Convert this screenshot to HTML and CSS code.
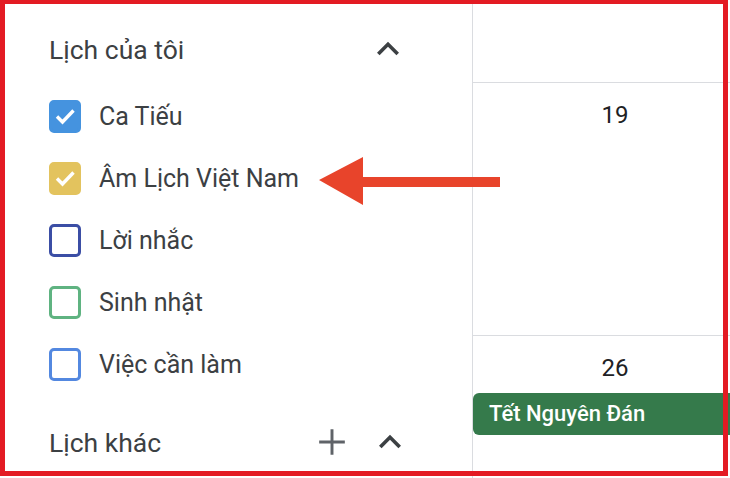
FILE: index.html
```html
<!DOCTYPE html>
<html lang="vi">
<head>
	<meta charset="UTF-8">
	<title>Lịch của tôi</title>
	<link rel="stylesheet" href="styles.css">
</head>
<body>
	<main class="page">
		<aside class="side">
			<h3 class="group">
				<span>Lịch của tôi</span>
				<span class="tools">
					<svg class="icon" viewBox="0 0 24 24"><path d="M12 8l-6 6 1.41 1.41L12 10.83l4.59 4.58L18 14z"/></svg>
				</span>
			</h3>
			<ul class="list">
				<li><i class="box on blue"><svg viewBox="0 0 32 32"><polyline points="8,16.5 13.5,22 24.5,10.5"/></svg></i>Ca Tiếu</li>
				<li><i class="box on yellow"><svg viewBox="0 0 32 32"><polyline points="8,16.5 13.5,22 24.5,10.5"/></svg></i>Âm Lịch Việt Nam</li>
				<li><i class="box navy"></i>Lời nhắc</li>
				<li><i class="box green"></i>Sinh nhật</li>
				<li><i class="box sky"></i>Việc cần làm</li>
			</ul>
			<h3 class="group other">
				<span>Lịch khác</span>
				<span class="tools">
					<svg class="icon plus" viewBox="0 0 24 24"><path d="M12 5v14M5 12h14"/></svg>
					<svg class="icon" viewBox="0 0 24 24"><path d="M12 8l-6 6 1.41 1.41L12 10.83l4.59 4.58L18 14z"/></svg>
				</span>
			</h3>
		</aside>
		<section class="cal">
			<div class="cell head"></div>
			<div class="cell week">
				<div class="day">19</div>
			</div>
			<div class="cell week">
				<div class="day">26</div>
				<div class="event">Tết Nguyên Đán</div>
			</div>
		</section>
	</main>
	<!-- chu thich tren anh chup -->
	<svg class="arrow" viewBox="0 0 182 50"><polygon points="1,24 45,1 45,21 182,21 182,31 45,31 45,49"/></svg>
	<div class="frame"></div>
</body>
</html>
```
FILE: styles.css
```css
html,body{
	margin: 0;
	width: 730px;
	height: 478px;
	overflow: hidden;
	background: #fff;
}
body{
	position: relative;
	font-family: Roboto, "Noto Sans", sans-serif;
	color: #3c4043;
}
.page{
	display: flex;
	height: 100%;
}
/* cot trai */
.side{
	width: 472px;
	flex: none;
	padding: 18px 63px 0 49px;
	box-sizing: border-box;
}
.group{
	display: flex;
	align-items: center;
	justify-content: space-between;
	height: 62px;
	margin: 0;
	font-size: 26.5px;
	font-weight: 400;
}
.group.other{
	margin-top: 16px;
}
.tools{
	display: flex;
	gap: 14px;
	margin-right: -1px;
}
.icon{
	width: 44px;
	height: 44px;
	fill: #3c4043;
}
.icon.plus{
	fill: none;
	stroke: #5f6368;
	stroke-width: 1.6;
}
.other .icon:last-child{
	margin-right: -2px;
}
.list{
	margin: 5px 0 0;
	padding: 0;
	list-style: none;
}
.list li{
	display: flex;
	align-items: center;
	gap: 18px;
	height: 62px;
	font-size: 25px;
}
.box{
	display: block;
	width: 32px;
	height: 33px;
	box-sizing: border-box;
	border: 3px solid;
	border-radius: 5px;
}
.box svg{
	display: block;
	width: 32px;
	height: 32px;
	margin: -3px;
	fill: none;
	stroke: #fff;
	stroke-width: 3.4;
}
.blue{ border-color: #4593df; background: #4593df; }
.yellow{ border-color: #e3c35e; background: #e3c35e; }
.navy{ border-color: #3b4ea5; }
.green{ border-color: #5fb381; }
.sky{ border-color: #5388e0; }
/* cot lich */
.cal{
	flex: 1;
	border-left: 1px solid #dadce0;
	overflow: hidden;
}
.cell{
	width: 284px;
	border-bottom: 1px solid #dadce0;
}
.head{
	height: 82px;
}
.week{
	height: 253px;
	padding-top: 18px;
	box-sizing: border-box;
}
.day{
	font-size: 24px;
	line-height: 28px;
	text-align: center;
	color: #202124;
}
.event{
	margin-top: 11px;
	height: 42px;
	padding-left: 16px;
	line-height: 42px;
	font-size: 22px;
	font-weight: 500;
	color: #fff;
	background: #357a4b;
	border-radius: 6px 0 0 6px;
}
/* mui ten + khung do */
.arrow{
	position: absolute;
	left: 318px;
	top: 156px;
	width: 182px;
	height: 50px;
	fill: #e8442b;
}
.frame{
	position: absolute;
	left: 0;
	top: 0;
	width: 728px;
	height: 476px;
	box-sizing: border-box;
	border: 5px solid #e31b23;
	border-top-width: 4px;
	pointer-events: none;
}
```
